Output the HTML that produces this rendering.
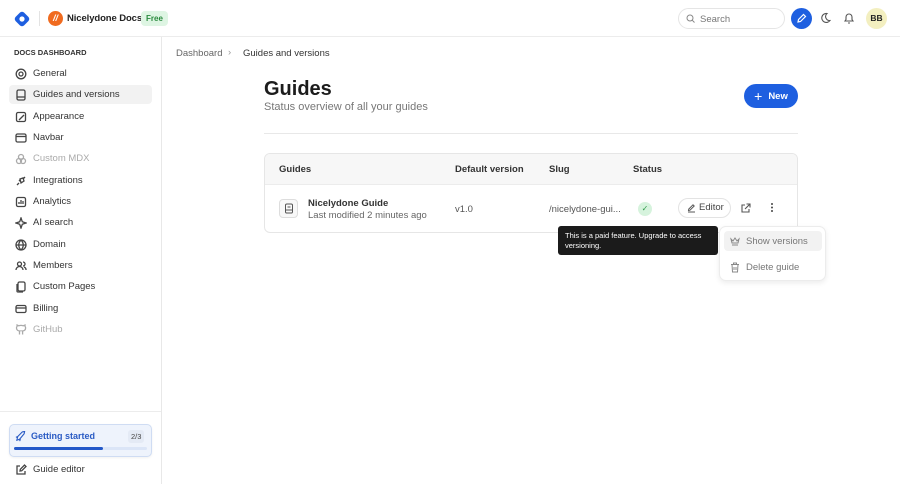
<!DOCTYPE html>
<html><head><style>
*{box-sizing:border-box;margin:0;padding:0}
body{width:900px;height:484px;overflow:hidden;font-family:"Liberation Sans",sans-serif;background:#fff;color:#1f2328;position:relative;font-size:9px}
.hdr{position:absolute;left:0;top:0;width:900px;height:37px;border-bottom:1px solid #ececec}
.side{position:absolute;left:0;top:37px;width:162px;height:447px;border-right:1px solid #e8e8e8}
.it{position:absolute;left:9px;width:143px;height:19px;display:flex;align-items:center;padding-left:6px;color:#333;font-size:9.5px}
.it svg{width:12px;height:12px;margin-right:6px;stroke:#444;fill:none;stroke-width:1.3}
.it.dim{color:#aaa}.it.dim svg{stroke:#aaa}
.abs{position:absolute}
</style></head><body>
<div class="hdr">
 <svg class="abs" style="left:13px;top:10px" width="18" height="18" viewBox="0 0 18 18"><rect x="3" y="3" width="12" height="12" rx="3" transform="rotate(45 9 9)" fill="#1e5fe0"/><circle cx="9" cy="9" r="2.6" fill="#fff"/></svg>
 <div class="abs" style="left:39px;top:11px;width:1px;height:15px;background:#e3e3e3"></div>
 <div class="abs" style="left:48px;top:11px;width:15px;height:15px;border-radius:50%;background:#f06b1f;color:#fff;font-size:9px;font-weight:bold;text-align:center;line-height:15px;font-style:italic">//</div>
 <div class="abs" style="left:67px;top:13px;font-size:9.5px;font-weight:bold;color:#222;letter-spacing:-0.1px">Nicelydone Docs</div>
 <div class="abs" style="left:141px;top:11px;background:#def5e3;color:#2a8a3e;font-size:8px;font-weight:bold;padding:3px 5px;border-radius:4px">Free</div>
 <div class="abs" style="left:678px;top:8px;width:107px;height:21px;border:1px solid #e5e5e5;border-radius:11px;color:#777;font-size:9.5px;padding:5px 0 0 21px">Search</div>
 <svg class="abs" style="left:686px;top:14px" width="9" height="9" viewBox="0 0 9 9" fill="none" stroke="#888" stroke-width="1"><circle cx="4" cy="4" r="3"/><path d="M6.2 6.2L8.5 8.5"/></svg>
 <div class="abs" style="left:791px;top:8px;width:21px;height:21px;border-radius:50%;background:#1e5fe0"></div>
 <svg class="abs" style="left:796px;top:13px" width="11" height="11" viewBox="0 0 11 11" fill="none" stroke="#fff" stroke-width="1.2"><path d="M2 9l.5-2.5L7.5 1.5l2 2-5 5z"/></svg>
 <svg class="abs" style="left:819px;top:12px" width="12" height="12" viewBox="0 0 12 12" fill="none" stroke="#555" stroke-width="1.1"><path d="M8 1.5a4.5 4.5 0 1 0 3 7A4 4 0 0 1 8 1.5z"/></svg>
 <svg class="abs" style="left:843px;top:12px" width="12" height="13" viewBox="0 0 12 13" fill="none" stroke="#555" stroke-width="1.1"><path d="M2 9h8L9 7.5V5a3 3 0 0 0-6 0v2.5zM5 11h2"/></svg>
 <div class="abs" style="left:866px;top:8px;width:21px;height:21px;border-radius:50%;background:#f3efc0;font-size:8.5px;font-weight:bold;text-align:center;line-height:21px;color:#222">BB</div>
</div>
<div class="side">
 <div class="abs" style="left:14px;top:11px;font-size:7.5px;font-weight:bold;color:#333">DOCS DASHBOARD</div>
 <div class="it" style="top:27px"><svg viewBox="0 0 12 12"><circle cx="6" cy="6" r="2"/><circle cx="6" cy="6" r="4.8"/></svg>General</div>
 <div class="it" style="top:48px;background:#f2f2f2;border-radius:4px"><svg viewBox="0 0 12 12"><rect x="2" y="1" width="8" height="10" rx="1.5"/><path d="M2 8h8"/></svg>Guides and versions</div>
 <div class="it" style="top:70px"><svg viewBox="0 0 12 12"><rect x="1.5" y="1.5" width="9" height="9" rx="1.5"/><path d="M4 9l5-5"/></svg>Appearance</div>
 <div class="it" style="top:91px"><svg viewBox="0 0 12 12"><rect x="1" y="2" width="10" height="8" rx="1.5"/><path d="M1 4.5h10"/></svg>Navbar</div>
 <div class="it dim" style="top:112px"><svg viewBox="0 0 12 12"><circle cx="6" cy="4" r="2.5"/><circle cx="4" cy="8" r="2.5"/><circle cx="8" cy="8" r="2.5"/></svg>Custom MDX</div>
 <div class="it" style="top:134px"><svg viewBox="0 0 12 12"><path d="M2 10l2-2M8 4l2-2M4 5l3 3M5 4l3-1 1 3-3 2z"/></svg>Integrations</div>
 <div class="it" style="top:155px"><svg viewBox="0 0 12 12"><rect x="1.5" y="1.5" width="9" height="9" rx="1.5"/><path d="M4 8V6M6 8V4M8 8V5"/></svg>Analytics</div>
 <div class="it" style="top:176px"><svg viewBox="0 0 12 12"><path d="M6 1l1.3 3.7L11 6 7.3 7.3 6 11 4.7 7.3 1 6l3.7-1.3z"/></svg>AI search</div>
 <div class="it" style="top:198px"><svg viewBox="0 0 12 12"><circle cx="6" cy="6" r="5"/><path d="M1 6h10M6 1c-3 3-3 7 0 10M6 1c3 3 3 7 0 10"/></svg>Domain</div>
 <div class="it" style="top:219px"><svg viewBox="0 0 12 12"><circle cx="4.5" cy="4" r="2"/><path d="M1 10a3.5 3.5 0 0 1 7 0M8 2a2 2 0 0 1 0 4M9 7a3 3 0 0 1 2 3"/></svg>Members</div>
 <div class="it" style="top:240px"><svg viewBox="0 0 12 12"><rect x="3" y="1" width="7" height="9" rx="1.5"/><path d="M2 3v7a1 1 0 0 0 1 1h5"/></svg>Custom Pages</div>
 <div class="it" style="top:262px"><svg viewBox="0 0 12 12"><rect x="1" y="2.5" width="10" height="7" rx="1.5"/><path d="M1 5h10"/></svg>Billing</div>
 <div class="it dim" style="top:283px"><svg viewBox="0 0 12 12"><path d="M4.5 10.5V8.5a2 2 0 0 1 .5-1.5c-2 0-3.5-1-3.5-3a2.5 2.5 0 0 1 .6-1.7V1l1.7.8a6 6 0 0 1 4.4 0L10 1v1.3a2.5 2.5 0 0 1 .6 1.7c0 2-1.5 3-3.5 3a2 2 0 0 1 .5 1.5v2"/></svg>GitHub</div>
 <div class="abs" style="left:0;top:374px;width:161px;height:1px;background:#ececec"></div>
 <div class="abs" style="left:9px;top:387px;width:143px;height:33px;border:1px solid #cfdcf3;background:#eef3fc;border-radius:5px;box-shadow:0 1px 2px rgba(0,0,0,.06)">
  <svg class="abs" style="left:5px;top:6px" width="11" height="11" viewBox="0 0 12 12" fill="none" stroke="#2a5bc4" stroke-width="1.2"><path d="M2 10l3-1 5-6 .5-2.5L8 1 3 6zM3 6L1 7M6 9l-1 2"/></svg>
  <div class="abs" style="left:21px;top:6px;font-size:9px;font-weight:bold;color:#2a5bc4">Getting started</div>
  <div class="abs" style="left:118px;top:5px;font-size:7.5px;color:#444;background:#e4eaf5;padding:2px 3px;border-radius:3px">2/3</div>
  <div class="abs" style="left:4px;top:22px;width:133px;height:3px;background:#dbe5f7;border-radius:2px"><div style="width:89px;height:3px;background:#2358c8;border-radius:2px"></div></div>
 </div>
 <div class="it" style="top:423px"><svg viewBox="0 0 12 12"><path d="M10 7v3H2V2h3M5 7l.3-1.7L9.5 1 11 2.5 6.7 6.8z"/></svg>Guide editor</div>
</div>
<div class="abs" style="left:176px;top:48px;font-size:9.5px;color:#666">Dashboard</div>
<div class="abs" style="left:228px;top:47px;font-size:9.5px;color:#999">›</div>
<div class="abs" style="left:243px;top:48px;font-size:9.5px;color:#333">Guides and versions</div>
<div class="abs" style="left:264px;top:78px;font-size:20px;font-weight:bold;color:#1c1c1c">Guides</div>
<div class="abs" style="left:264px;top:101px;font-size:11px;color:#777">Status overview of all your guides</div>
<div class="abs" style="left:744px;top:84px;width:54px;height:24px;border-radius:12px;background:#1e5fe0;color:#fff;font-size:9.5px;font-weight:bold;display:flex;align-items:center;justify-content:center;gap:6px"><span style="font-size:14px;font-weight:normal">+</span><span>New</span></div>
<div class="abs" style="left:264px;top:133px;width:534px;height:1px;background:#e8e8e8"></div>
<div class="abs" style="left:264px;top:153px;width:534px;height:80px;border:1px solid #e6e6e6;border-radius:6px;overflow:hidden">
 <div style="height:31px;background:#f7f7f7;border-bottom:1px solid #ececec"></div>
</div>
<div class="abs" style="left:279px;top:164px;font-size:9.5px;font-weight:bold;color:#333">Guides</div>
<div class="abs" style="left:455px;top:164px;font-size:9.5px;font-weight:bold;color:#333">Default version</div>
<div class="abs" style="left:549px;top:164px;font-size:9.5px;font-weight:bold;color:#333">Slug</div>
<div class="abs" style="left:633px;top:164px;font-size:9.5px;font-weight:bold;color:#333">Status</div>
<div class="abs" style="left:279px;top:199px;width:19px;height:19px;border:1px solid #ddd;border-radius:4px;background:#f8f8f8"></div>
<svg class="abs" style="left:284px;top:203px" width="10" height="11" viewBox="0 0 10 11" fill="none" stroke="#555" stroke-width="1"><rect x="1.5" y="1" width="7" height="9" rx="1.3"/><path d="M1.5 7h7M3.5 4h3"/></svg>
<div class="abs" style="left:308px;top:198px;font-size:9.5px;font-weight:bold;color:#333">Nicelydone Guide</div>
<div class="abs" style="left:308px;top:210px;font-size:9.5px;color:#666">Last modified 2 minutes ago</div>
<div class="abs" style="left:455px;top:204px;font-size:9.5px;color:#555">v1.0</div>
<div class="abs" style="left:549px;top:204px;font-size:9.5px;color:#555">/nicelydone-gui...</div>
<div class="abs" style="left:638px;top:202px;width:14px;height:14px;border-radius:50%;background:#d6f3dd;color:#2f9a4a;font-size:8px;text-align:center;line-height:14px">✓</div>
<div class="abs" style="left:678px;top:198px;width:53px;height:20px;border:1px solid #e3e3e3;border-radius:10px;font-size:9.5px;color:#444;line-height:18px;padding-left:20px">Editor</div>
<svg class="abs" style="left:687px;top:204px" width="9" height="9" viewBox="0 0 9 9" fill="none" stroke="#555" stroke-width="1"><path d="M1 8h7M1.5 6.5l.3-1.5L6 .8 7.2 2 3 6.2z"/></svg>
<svg class="abs" style="left:740px;top:203px" width="11" height="11" viewBox="0 0 11 11" fill="none" stroke="#555" stroke-width="1.1"><path d="M5 2H2v7h7V6M6.5 1H10v3.5M10 1L5 6"/></svg>
<div class="abs" style="left:771px;top:203px;width:2px;height:2px;background:#444;border-radius:1px;box-shadow:0 3.5px 0 #444,0 7px 0 #444"></div>
<div class="abs" style="left:558px;top:226px;width:160px;height:29px;background:#1b1b1b;border-radius:3px;color:#fff;font-size:7.5px;line-height:9.5px;padding:5px 7px">This is a paid feature. Upgrade to access versioning.</div>
<div class="abs" style="left:719px;top:226px;width:107px;height:55px;background:#fff;border:1px solid #ececec;border-radius:7px;box-shadow:0 2px 6px rgba(0,0,0,.08)">
 <div class="abs" style="left:4px;top:4px;width:98px;height:20px;background:#f2f2f2;border-radius:4px"></div>
 <svg class="abs" style="left:10px;top:9px" width="10" height="10" viewBox="0 0 10 10" fill="none" stroke="#888" stroke-width="1"><path d="M1 3l2 2 2-3 2 3 2-2-1 4H2zM2 9h6"/></svg>
 <div class="abs" style="left:26px;top:9px;font-size:9.5px;color:#777">Show versions</div>
 <svg class="abs" style="left:10px;top:35px" width="10" height="11" viewBox="0 0 10 11" fill="none" stroke="#888" stroke-width="1"><path d="M1 2.5h8M3.5 2.5V1h3v1.5M2 2.5l.5 7.5h5l.5-7.5M4 5v3M6 5v3"/></svg>
 <div class="abs" style="left:26px;top:35px;font-size:9.5px;color:#777">Delete guide</div>
</div>
</body></html>
